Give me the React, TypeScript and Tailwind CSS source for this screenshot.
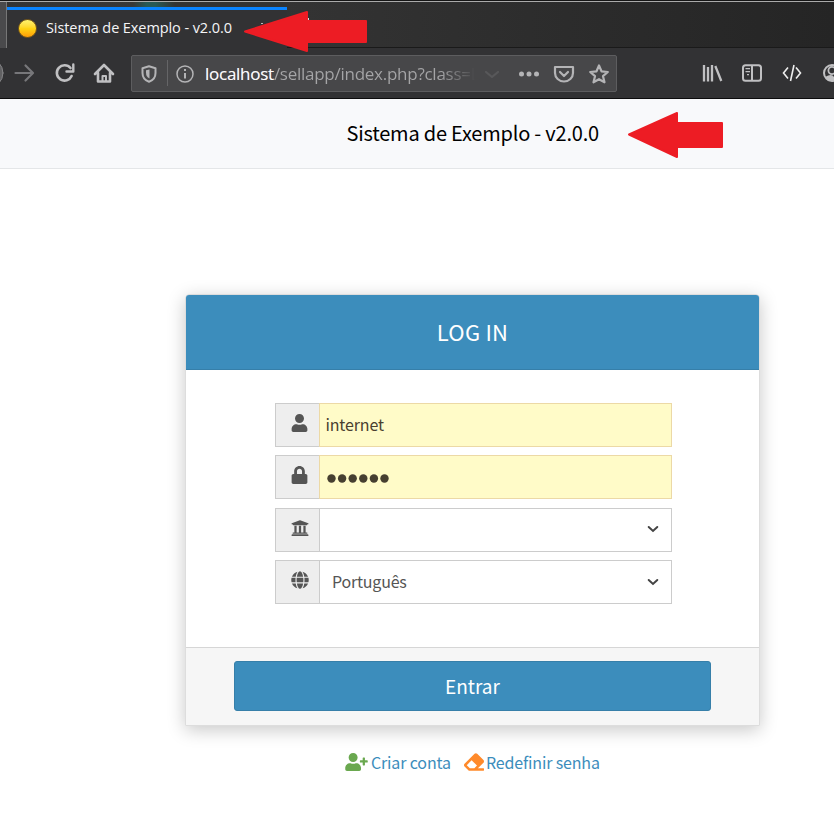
import React from "react";
import { FaUser, FaLock, FaUniversity, FaGlobe, FaUserPlus, FaEraser } from "react-icons/fa";

const page = "font-['Noto_Sans_CJK_SC','Noto_Sans',sans-serif]";

function Arrow({ className, d }: { className: string; d: string }) {
  return (
    <svg className={className} fill="#ed1c24" stroke="#ed1c24" strokeWidth="2" strokeLinejoin="round" aria-hidden="true">
      <path d={d} />
    </svg>
  );
}

function Chevron({ className }: { className: string }) {
  return (
    <svg className={`mr-[12px] h-[8px] w-[12px] ${className}`} viewBox="0 0 12 8" fill="none" stroke="#444" strokeWidth="2" strokeLinecap="round">
      <path d="M1.7 2L6 6L10.3 2" />
    </svg>
  );
}

function Field({ icon, filled, children, className }: { icon: React.ReactNode; filled?: boolean; children?: React.ReactNode; className?: string }) {
  return (
    <div className={`flex h-[44px] w-[397px] ${className ?? ""}`}>
      <div className="flex w-[44px] items-start border border-r-0 border-[#ccc] bg-[#eee] pt-[10px] text-[18px] text-[#555]">{icon}</div>
      <div className={filled ? "flex flex-1 items-center border border-[#ecd9a6] bg-[#fffbc8] pl-[5.5px]" : "flex flex-1 items-center justify-between border border-[#ccc] bg-white pl-[12px]"}>{children}</div>
    </div>
  );
}

function Browser() {
  return (
    <div className="relative h-[99px] overflow-hidden bg-[#323234] font-['Open_Sans','Noto_Sans',sans-serif]">
      <div className="flex h-[48px] border-t border-[#151515] bg-gradient-to-r from-[#3b3b3b] via-[#303030] to-[#252525]">
        <div className="flex w-full border-t border-[#aaa]">
          <div className="w-[7px] border-r border-[#777] bg-[#4a4a4c]" />
          <div className="flex h-[46px] w-[280px] flex-col">
            <div className="h-[5px] bg-[linear-gradient(90deg,#333_0%,#383838_45%,#285a54_50%,#285a54_53%,#333_60%,#333_100%)]" />
            <div className="h-[3px] bg-[#0a84ff]" />
            <div className="flex flex-1 items-center bg-[#323234] pb-[1px] pl-[11px]">
              <div className="h-[19px] w-[19px] rounded-full border border-[#7a5a18] bg-gradient-to-b from-[#fff26b] via-[#ffd414] to-[#ff9c08]" />
              <span className="-mt-[2px] ml-[9px] whitespace-nowrap text-[14.5px] tracking-[-0.09px] text-[#f5f5f7]">Sistema de Exemplo - v2.0.0</span>
            </div>
          </div>
          <div className="flex-1 border-b border-[#1a1a1a]" />
        </div>
      </div>
      <div className="flex h-[51px] items-center border-b border-[#0c0c0d]">
        <svg className="h-[50px] w-[131px] shrink-0" viewBox="0 48 131 50" fill="none" stroke="#c0c0c2" strokeWidth="2.6" strokeLinecap="round" strokeLinejoin="round">
          <circle cx="-12" cy="73" r="15" fill="#606062" stroke="#858587" strokeWidth="1" />
          <path d="M15.5 73H32M25.5 65.5L33 73L25.5 80.5" stroke="#77777a" strokeWidth="2.2" />
          <path d="M70.5 68A7.7 7.7 0 1 0 71.6 76" />
          <path d="M73.3 64.5V71.5H66.5" strokeWidth="2.4" />
          <path d="M95 74L104 65L113 74M98 73V81.5H110V73" />
          <path d="M102.5 81V76H106V81" strokeWidth="2" />
        </svg>
        <div className="flex h-[37px] w-[486px] items-center rounded-[2px] border border-[#5d5d5f] bg-[#474749]">
          <svg className="h-[35px] w-[73px] shrink-0" viewBox="132 55 73 35" fill="none" stroke="#b4b4b6" strokeWidth="2">
            <path d="M142.5 67.2L149 65.3L155.5 67.2V72Q155.5 78.5 149 80.8Q142.5 78.5 142.5 72Z" strokeLinejoin="round" />
            <path d="M149.5 68.5V77.5Q146 76 146 71.5V69.3Z" fill="#b4b4b6" stroke="none" />
            <path d="M167.5 59V85" stroke="#656567" strokeWidth="1" />
            <circle cx="185" cy="73" r="8" strokeWidth="1.5" />
            <path d="M185 72V77.5M185 68V70" />
          </svg>
          <div className="mt-[2px] w-[284px] shrink-0 whitespace-nowrap bg-[linear-gradient(90deg,#a5a5a7_235px,#474749_270px)] bg-clip-text text-[17px] tracking-[-0.26px] text-transparent">
            <span className="text-[#f9f9fa]">localhost</span>/sellapp/index.php?class=L
          </div>
          <svg className="h-[35px] w-[127px] shrink-0 overflow-visible" viewBox="489 55 127 35" fill="none" stroke="#b4b4b6" strokeWidth="2.2" strokeLinecap="round" strokeLinejoin="round">
            <path d="M486 71L492 76L498 71" stroke="#58585a" />
            <g fill="#b4b4b6" stroke="none"><circle cx="521.5" cy="73" r="2.5" /><circle cx="529" cy="73" r="2.5" /><circle cx="536.5" cy="73" r="2.5" /></g>
            <path d="M555 66H573V72A9 8.5 0 0 1 555 72ZM560 71L564 75L568 71" />
            <path d="M599 64.5L601.5 70.3L607.8 71L603 75.2L604.5 81.3L599 78.2L593.5 81.3L595 75.2L590.2 71L596.5 70.3Z" />
          </svg>
        </div>
        <svg className="h-[50px] w-[217px] shrink-0" viewBox="617 48 217 50" fill="none" stroke="#c0c0c2" strokeWidth="2">
          <path d="M704 65V81.5M708 67V81.5M712 65V81.5M715.3 66L721.3 81" strokeWidth="2.3" />
          <rect x="743" y="65.2" width="18" height="15.6" rx="2.5" />
          <path d="M752 65V81" />
          <path d="M745.5 68.7H750M745.5 71.7H750M747 74.7H749" strokeWidth="1.2" />
          <path d="M788 67.5L783.5 73L788 78.5M796 67.5L800.5 73L796 78.5M794 65L790.5 81" stroke="#eee" strokeWidth="1.6" />
          <circle cx="832" cy="73" r="8" />
          <circle cx="832" cy="70.5" r="3.6" strokeWidth="1.8" />
          <path d="M825 77Q832 73 834 77V81H828Z" fill="#c0c0c2" stroke="none" />
        </svg>
      </div>
      <Arrow className="absolute left-[240px] top-[0px] h-[60px] w-[130px]" d="M5 31.5L67 12V21H126V42H67V51Z" />
      <i className="absolute left-[308px] top-[18px] h-[2px] w-[1px] bg-[#ddd]" />
      <i className="absolute left-[261px] top-[23px] h-[1px] w-[2px] bg-[#bbb]" />
    </div>
  );
}

export default function App() {
  return (
    <div className={`h-[838px] w-[834px] overflow-hidden bg-white ${page}`}>
      <Browser />
      <header className="flex h-[70px] items-center border-b border-[#e4e6e8] bg-[#f8f9fb] pl-[346.5px]">
        <h1 className="w-[280.5px] whitespace-nowrap pb-[1px] text-[20px] leading-[30px] tracking-[-0.21px] text-black">Sistema de Exemplo - v2.0.0</h1>
        <Arrow className="h-[50px] w-[100px]" d="M2 25.5L50 4V14H95V38H50V48Z" />
      </header>
      <main className="flex flex-col pl-[185px] pt-[125px]">
        <section className="h-[432px] w-[575px] rounded-t-[4px] border border-[#ddd] shadow-[0_4px_18px_rgba(0,0,0,0.22)]">
          <div className="flex h-[75px] items-center justify-center rounded-t-[3px] border-b border-[#367fa9] bg-[#3c8dbc] pb-[1px] text-[22px] tracking-[0.2px] text-white">LOG IN</div>
          <div className="h-[277px] pl-[89px] pt-[33px]">
            <Field icon={<FaUser className="ml-[14px] w-[19px]" />} filled><span className="pb-[2px] text-[16px] tracking-[-0.15px] text-[#4a3f30]">internet</span></Field>
            <Field className="mt-[8px]" icon={<FaLock className="ml-[14px] w-[19px]" />} filled>
              <svg className="ml-[1px] mt-[2px] h-[9px] w-[64px]" fill="#463f30">
                {[0, 1, 2, 3, 4, 5].map((i) => <circle key={i} cx={4.5 + i * 10.6} cy="4.5" r="4.2" />)}
              </svg>
            </Field>
            <Field className="mt-[9px]" icon={<FaUniversity className="ml-[15px]" />}><span /><Chevron className="mb-[2px]" /></Field>
            <Field className="mt-[8px]" icon={<FaGlobe className="ml-[15px]" />}><span className="pb-[2px] text-[16px] tracking-[-0.2px] text-[#555]">Português</span><Chevron className="" /></Field>
          </div>
          <div className="h-[78px] border-t border-[#d6d6d6] bg-[#f6f6f6] pl-[48px] pt-[13px]">
            <button className="flex h-[50px] w-[477px] items-center justify-center rounded-[3px] border border-[#367fa9] bg-[#3c8dbc] text-[19px] text-white">Entrar</button>
          </div>
        </section>
        <nav className="mt-[23px] flex h-[26px] items-center whitespace-nowrap pl-[160px] text-[16px] tracking-[-0.15px] text-[#3c8dbc]">
          <a className="flex w-[119px] items-center gap-[3px]"><FaUserPlus className="h-[18px] w-[23px] text-[#6aa84f]" />Criar conta</a>
          <a className="flex items-center gap-[2px]"><FaEraser className="h-[20px] w-[20px] text-[#ff8a2b]" />Redefinir senha</a>
        </nav>
      </main>
    </div>
  );
}
